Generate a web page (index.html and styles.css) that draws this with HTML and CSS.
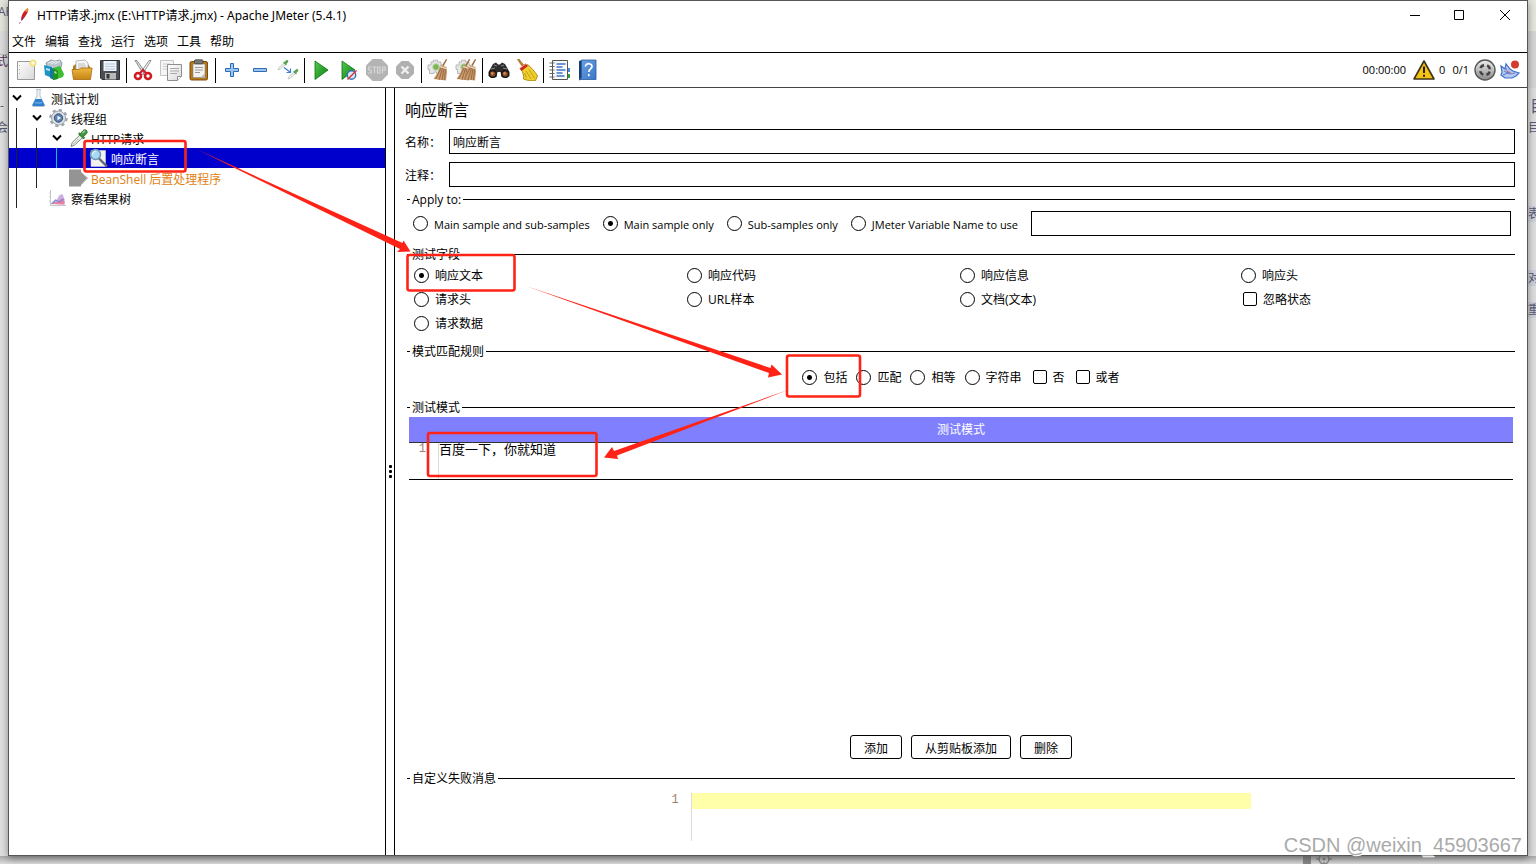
FILE: index.html
```html
<!DOCTYPE html>
<html lang="zh-CN">
<head>
<meta charset="utf-8">
<title>HTTP请求.jmx (E:\HTTP请求.jmx) - Apache JMeter (5.4.1)</title>
<link rel="stylesheet" href="styles.css">
</head>
<body>
<svg class="defs" aria-hidden="true">
  <defs>
    <linearGradient id="green" x1="0" y1="0" x2="1" y2="1"><stop offset="0" stop-color="#55c94e"/><stop offset="1" stop-color="#0a7f10"/></linearGradient>
    <linearGradient id="folder" x1="0" y1="0" x2="0" y2="1"><stop offset="0" stop-color="#f0b840"/><stop offset="1" stop-color="#c68414"/></linearGradient>
    <linearGradient id="paper" x1="0" y1="0" x2="1" y2="1"><stop offset="0" stop-color="#fff"/><stop offset="1" stop-color="#d8d8d8"/></linearGradient>
    <linearGradient id="book" x1="0" y1="0" x2="1" y2="1"><stop offset="0" stop-color="#6fa4e4"/><stop offset="1" stop-color="#3a77c8"/></linearGradient>
    <linearGradient id="knob" x1="0" y1="0" x2="0" y2="1"><stop offset="0" stop-color="#eee"/><stop offset="1" stop-color="#8a8a8a"/></linearGradient>
    <symbol id="broom" viewBox="0 0 22 22">
      <path d="M19 0l1.200.6-3.500 6.500-1.500-.8z" fill="#a06a3c"/>
      <path d="M13.500 6l6 2 .5 5-1 8.500L6.500 20l4-6z" fill="#c99a6b"/>
      <path d="M14 9l-5.500 11M15.500 9l-3.500 12M17 9.500l-2 11.500M18.500 10l-1 11" stroke="#8b5f38" stroke-width=".8" fill="none"/>
      <path d="M13 7.500l6.500 2.200" stroke="#eadbc8" stroke-width="1.200"/>
    </symbol>
    <symbol id="cog" viewBox="0 0 22 22">
      <path d="M4 3h2.500V1.200h4V3H14v3h1.500v5H14v3.500H9.500V13H7v1.500H2.500V10.500H1V6h3z" fill="#e6e6e6" stroke="#aaa" stroke-width=".8"/>
      <circle cx="9" cy="8" r="3.200" fill="#78b84c" stroke="#b9cfa8" stroke-width="1"/>
    </symbol>
    <symbol id="dropper" viewBox="0 0 20 20">
      <path d="M2 18.500l1.200-4L11 7l2.600 2.600-8 7.500z" fill="#eef4ee" stroke="#6f7a72" stroke-width=".9"/>
      <path d="M4 16.500l6-6" stroke="#a9b8ac" stroke-width="1"/>
      <path d="M9.500 6l5 5 1.200-1.300-1-1.200 3-3c1.200-1.500.3-3.600-1.500-3.800-1 0-1.600.4-2.300 1.100L11.500 5.500l-1-.8z" fill="#3f9440" stroke="#1f5f26" stroke-width=".7"/>
      <path d="M13.500 5l2.500-2.300" stroke="#a4dca0" stroke-width="1.200"/>
    </symbol>
    <symbol id="mini-dropper" viewBox="0 0 12 12">
      <path d="M1 11l1-2.500L7 4l1.500 1.500L3.500 10z" fill="#f0f2f0" stroke="#b9c0ba" stroke-width=".8"/>
      <path d="M6 3.500l3 3 .8-.8-.5-.7 1.700-1.700c.8-.9.2-2-.9-2.200-.6 0-1 .2-1.400.6L7.300 3z" fill="#58a052"/>
    </symbol>
  </defs>
</svg>

<div class="desktop">
  <aside class="behind behind-left">
    <span class="peek-a">AP</span><span class="peek-b">式</span><span class="peek-c">-</span><span class="peek-d">会</span>
  </aside>

  <div class="window">
    <header class="titlebar">
      <svg class="feather" viewBox="0 0 12 18"><path d="M3.200 12.500C3 8.500 5.500 4 9.500 1.200c1.300 1.300.6 3-.5 5.200-1.300 2.500-2.800 4.500-4.800 6.800z" fill="#c9202c"/><path d="M6.500 4c1-1.200 2-2.200 3-2.800 1.300 1 .8 2.500 0 4z" fill="#ec8a2c"/><path d="M1.500 16.500l.8-1.200M3.500 13.500L5 10" stroke="#7d2365" stroke-width="1" fill="none"/></svg>
      <h1>HTTP请求.jmx (E:\HTTP请求.jmx) - Apache JMeter (5.4.1)</h1>
      <div class="window-controls">
        <button aria-label="最小化"><svg viewBox="0 0 12 12"><path d="M1 5.500h10"/></svg></button>
        <button aria-label="最大化"><svg viewBox="0 0 12 12"><path d="M.5.500h9v9h-9z"/></svg></button>
        <button aria-label="关闭"><svg viewBox="0 0 12 12"><path d="M1 0l10 10M11 0L1 10"/></svg></button>
      </div>
    </header>

    <nav class="menubar">
      <button>文件</button><button>编辑</button><button>查找</button><button>运行</button><button>选项</button><button>工具</button><button>帮助</button>
    </nav>

    <div class="toolbar">
      <button aria-label="新建"><svg viewBox="0 0 22 22"><path d="M2.500 2.500h17v18h-17z" fill="url(#paper)" stroke="#9a9a9a"/><path d="M4.500 6v1M4.500 10v1M4.500 14v1" stroke="#aaa"/><circle cx="18" cy="4" r="2.600" fill="#fffbe0" stroke="#f2e27a" stroke-width="1.800"/></svg></button>
      <button aria-label="模板"><svg viewBox="0 0 22 22"><path d="M3 4l5-3 4 1 5-1 2 3-2 9H6z" fill="#b9c6cc" stroke="#7b8c94" stroke-width=".8"/><path d="M5 4l6-2M8 5l6-3M12 5l5-3" stroke="#eef3f5"/><path d="M1 6l8 2v11l-7-3z" fill="#1d95c6"/><path d="M3 9l4 1v2L3 11z" fill="#bfe6f6"/><path d="M7 8l4 2v11l-4-2z" fill="#1376a4"/><path d="M10 9l7-2 4 8-1 3-9 3z" fill="#3dbd32"/><path d="M10 9l5 3v8l-5 1z" fill="#1f9220"/><path d="M11.500 12l2 1v2l-2-1z" fill="#b9efb0"/></svg></button>
      <button aria-label="打开"><svg viewBox="0 0 22 22"><path d="M2 7l3-2h12l2 3v11H2z" fill="#b17a1c"/><path d="M5 2l9-1 3 3v9H5z" fill="#f7f7f7" stroke="#a8a8a8" stroke-width=".8"/><path d="M7 5h7M7 7h8M7 9h8" stroke="#aaa" stroke-width=".8"/><path d="M1 10.500h7l2-1.500h11l-1.500 11.500h-17z" fill="url(#folder)" stroke="#a76b0c" stroke-width=".8"/></svg></button>
      <button aria-label="保存"><svg viewBox="0 0 22 22"><path d="M1.500 1.500h19v19H3l-1.500-1.500z" fill="#4a4e54" stroke="#2e3136"/><path d="M4.500 2h13v10h-13z" fill="#eef4fa"/><path d="M6 5h10M6 7.500h10M6 10h10" stroke="#a4bdd2" stroke-width=".8"/><path d="M6 14h11v6.500H6z" fill="#b8b8b8"/><path d="M7.500 15h3v4.500h-3z" fill="#333"/></svg></button>
      <i class="sep"></i>
      <button aria-label="剪切"><svg viewBox="0 0 22 22"><path d="M3 1.500l2 0 9 13-2 1.500z" fill="#ddd" stroke="#777" stroke-width=".8"/><path d="M19 1.500l-2 0-9 13 2 1.500z" fill="#f3f3f3" stroke="#777" stroke-width=".8"/><circle cx="6" cy="17" r="3" fill="none" stroke="#d01c24" stroke-width="2.600"/><circle cx="16" cy="17" r="3" fill="none" stroke="#d01c24" stroke-width="2.600"/><path d="M8 14l3-3 3 3" stroke="#d01c24" stroke-width="2" fill="none"/></svg></button>
      <button aria-label="复制"><svg viewBox="0 0 22 22"><path d="M.5 1.500h13v15H.5z" fill="#f5f5f5" stroke="#c5c5c5"/><path d="M3 5h7M3 7.500h7M3 10h4" stroke="#ccc"/><path d="M7.500 5.500h14v12l-4 4h-10z" fill="url(#paper)" stroke="#8f8f8f"/><path d="M10 9.500h9M10 12h9M10 14.500h7" stroke="#aaa"/><path d="M17.500 21.500v-4h4" fill="#fff" stroke="#8f8f8f"/></svg></button>
      <button aria-label="粘贴"><svg viewBox="0 0 22 22"><rect x="2" y="2.500" width="17.500" height="18.500" rx="1.500" fill="#b5761c" stroke="#7d4e0c"/><path d="M5 5h12v13.500H5z" fill="#f3f3f3" stroke="#888" stroke-width=".6"/><path d="M7 8.500h8M7 11h8M7 13.500h5" stroke="#999"/><path d="M17 14v4.500h-4.500z" fill="#bbb"/><rect x="6.500" y=".8" width="8.500" height="4" rx="1" fill="#777" stroke="#444" stroke-width=".8"/></svg></button>
      <i class="sep"></i>
      <button aria-label="展开"><svg viewBox="0 0 22 22"><path d="M9.500 4.500h3v5h5v3h-5v5h-3v-5h-5v-3h5z" fill="#9cc3ee" stroke="#2f6db5"/></svg></button>
      <button aria-label="折叠"><svg viewBox="0 0 22 22"><path d="M4.500 9.500h13v3h-13z" fill="#9cc3ee" stroke="#2f6db5"/></svg></button>
      <button aria-label="切换"><svg viewBox="0 0 22 22"><use href="#mini-dropper" x="0" y="0" width="12" height="12"/><use href="#mini-dropper" x="10" y="9" width="12" height="12"/><path d="M7 8.500l6 4.500M13.500 9.500V13.500H9.500" stroke="#3f7fd6" stroke-width="1.200" fill="none"/></svg></button>
      <i class="sep"></i>
      <button aria-label="启动"><svg viewBox="0 0 22 22"><path d="M5 2l13 9L5 20.500z" fill="url(#green)" stroke="#0b7312" stroke-width=".8"/></svg></button>
      <button aria-label="不停顿启动"><svg viewBox="0 0 22 22"><path d="M4 2l13 9L4 20.500z" fill="url(#green)" stroke="#0b7312" stroke-width=".8"/><circle cx="13.500" cy="16" r="4.200" fill="#dbe8f8" stroke="#3e6fb5" stroke-width="1.400"/><path d="M9.500 20.500l9-9" stroke="#e03030" stroke-width="1.500"/></svg></button>
      <button aria-label="停止" disabled><svg viewBox="0 0 22 22"><path d="M6.500 0h9L22 6.500v9L15.500 22h-9L0 15.500v-9z" fill="#b4b4b4"/><path d="M5.600 8H2.700v3h2.500v3H2.200M6.500 8h4M8.500 8v6M11.500 8h2.500v6h-2.500zM16.500 14.500V8H19v3.200h-2.500" stroke="#d8d8d8" stroke-width="1.200" fill="none"/></svg></button>
      <button aria-label="关闭" disabled><svg viewBox="0 0 22 22"><path d="M7.500 2h7L20 7.500v7L14.500 20h-7L2 14.500v-7z" fill="#b0b0b0"/><path d="M7.500 7.500l7 7M14.500 7.500l-7 7" stroke="#eee" stroke-width="2.400"/></svg></button>
      <i class="sep"></i>
      <button aria-label="清除"><svg viewBox="0 0 22 22"><use href="#cog" width="22" height="22"/><use href="#broom" width="22" height="22"/></svg></button>
      <button aria-label="清除全部"><svg viewBox="0 0 22 22"><use href="#cog" width="22" height="22"/><use href="#broom" x="-5" width="22" height="22"/><use href="#broom" x="1" width="22" height="22"/></svg></button>
      <i class="sep"></i>
      <button aria-label="查找"><svg viewBox="0 0 22 22"><path d="M5 5l3-1.500 2 2h2l2-2L17 5l4.500 8v4l-3 2-5-1-1-5H9.500l-1 5-5 1-3-2v-4z" fill="#2c2c2c"/><path d="M6 6l3 1M16 6l-3 1M3 10l4-1M19 10l-4-1" stroke="#888"/><circle cx="4.800" cy="15" r="3.300" fill="#8e4a22" stroke="#111" stroke-width="1.200"/><circle cx="17.200" cy="15" r="3.300" fill="#8e4a22" stroke="#111" stroke-width="1.200"/><circle cx="4.200" cy="14.400" r="1.300" fill="#d08a58"/><circle cx="16.600" cy="14.400" r="1.300" fill="#d08a58"/></svg></button>
      <button aria-label="重置查找"><svg viewBox="0 0 22 22"><path d="M1.500.5L3 0l5 6.300-1.800 1.300z" fill="#c8802c" stroke="#8d5212" stroke-width=".5"/><path d="M5 10l6.500-4.500C15 8 19 13 21.500 17l-2 4.500c-4 .5-8 .2-12-1.500C8 17 7 13 5 10z" fill="#f0cf2e" stroke="#a98506" stroke-width=".9"/><path d="M10 12l5 8M13 10.500l5.500 9M8.500 14l2 5" stroke="#b99a10" stroke-width=".9"/><path d="M3.500 9.500L9.500 4.500l2.500 2.500-6.500 5z" fill="#cc2a20"/><path d="M4.200 9L10 4.800" stroke="#f0b0a0" stroke-width=".8"/></svg></button>
      <i class="sep"></i>
      <button aria-label="函数助手"><svg viewBox="0 0 22 22"><path d="M18 9h3v4h-3z" fill="#4a88e8"/><path d="M18 15h3v4h-3z" fill="#2f9c3c"/><path d="M3.500 1.500h15v19h-15z" fill="#fafafa" stroke="#555"/><path d="M.5 4h5M.5 7.500h5M.5 11h5M.5 14.500h5M.5 18h5" stroke="#666" stroke-width="1.200"/><path d="M7.500 5h9M7.500 8h6M7.500 11h9M7.500 14h6M7.500 17h8" stroke="#3f73c8" stroke-width="1.300"/></svg></button>
      <button aria-label="帮助"><svg viewBox="0 0 22 22"><path d="M2 2l3-1v19l-3 1.500z" fill="#1c3f73"/><path d="M4.500 1h14.500v19.500H2l2.500-1.500z" fill="url(#book)" stroke="#2c5c9e" stroke-width=".8"/><path d="M8.500 7.500c0-3.800 6.500-3.600 6.500 0 0 2.500-3.200 2.500-3.200 5.500M11.800 15v2.200" stroke="#fff" stroke-width="1.700" fill="none"/></svg></button>

      <div class="status">
        <span class="elapsed">00:00:00</span>
        <svg viewBox="0 0 22 22"><path d="M11 2L21 20H1z" fill="#f5c211" stroke="#3b3416" stroke-width="1.600" stroke-linejoin="round"/><path d="M11 7.500v6.500M11 15.700v2" stroke="#222" stroke-width="2"/></svg>
        <span class="errors">0</span>
        <span class="threads">0/1</span>
        <svg viewBox="0 0 22 22"><circle cx="11" cy="11" r="10" fill="url(#knob)" stroke="#555" stroke-width="1.400"/><circle cx="11" cy="11" r="5" fill="none" stroke="#444" stroke-width="2.600" stroke-dasharray="4.600 3.250" stroke-dashoffset="-1.600"/></svg>
        <svg class="plug" viewBox="0 0 22 22"><path d="M2 7l4 3 1-5 4 5 3 2 6 2-3 3-4 2-7 0-4-3 1-3z" fill="#b4caf2" stroke="#3f6dcb" stroke-width="1.200"/><path d="M5 12l6 3 5-1M6 8l4 7M4 16l7-3" stroke="#5878cf" fill="none"/><path d="M7 11l7 4" stroke="#d68a8a"/><circle cx="16" cy="5.500" r="4" fill="#d23c2e"/></svg>
      </div>
    </div>

    <div class="body">
      <div class="tree" role="tree">
        <div class="node" role="treeitem">
          <button class="toggle" aria-label="折叠"><svg viewBox="0 0 12 12"><path d="M2 3.500l4 4 4-4"/></svg></button>
          <svg class="icon" viewBox="0 0 20 20"><path d="M7 1.500h5M8 2v6L3.500 17c-.4 1 .2 1.500 1 1.500h10c.8 0 1.400-.5 1-1.500L11 8V2" fill="#eef5fb" stroke="#b4c2ce"/><path d="M6.500 11h6l3 6c.2.700-.2 1-.8 1H4.300c-.6 0-1-.3-.8-1z" fill="#2f7fd0"/><path d="M6 15c2-1 4 1 7-.5" stroke="#8cc0f0" fill="none"/></svg>
          <span class="label">测试计划</span>
        </div>
        <div class="node" role="treeitem">
          <i class="guide"></i>
          <button class="toggle" aria-label="折叠"><svg viewBox="0 0 12 12"><path d="M2 3.500l4 4 4-4"/></svg></button>
          <svg class="icon" viewBox="0 0 20 20"><circle cx="9.500" cy="10" r="8" fill="none" stroke="#9da4ac" stroke-width="2.400" stroke-dasharray="3.200 3.080"/><circle cx="9.500" cy="10" r="7" fill="#dde0e4" stroke="#9da4ac"/><circle cx="9.500" cy="10" r="4.200" fill="#5c83b4" stroke="#3a5270"/><path d="M8.500 7.800l3.500 2.200-3.500 2.200z" fill="#fff"/></svg>
          <span class="label">线程组</span>
        </div>
        <div class="node" role="treeitem">
          <i class="guide"></i><i class="guide"></i>
          <button class="toggle" aria-label="折叠"><svg viewBox="0 0 12 12"><path d="M2 3.500l4 4 4-4"/></svg></button>
          <svg class="icon" viewBox="0 0 20 20"><use href="#dropper" width="20" height="20"/></svg>
          <span class="label">HTTP请求</span>
        </div>
        <div class="node selected" role="treeitem" aria-selected="true">
          <i class="guide"></i><i class="guide"></i><i class="guide current"></i><i class="blank"></i>
          <svg class="icon" viewBox="0 0 20 20"><path d="M2 2.500h14.500v16H2z" fill="#f1f1f1" stroke="#ccc" stroke-width=".6"/><path d="M10 10.500l8 8" stroke="#5e6a70" stroke-width="2.400"/><circle cx="6.500" cy="6.500" r="5" fill="#a9d8f4" stroke="#6a96ae" stroke-width="1.500"/><path d="M3.500 6.500c0-2 1.500-3 3-3" stroke="#fff" fill="none"/></svg>
          <span class="label">响应断言</span>
        </div>
        <div class="node disabled" role="treeitem">
          <i class="guide"></i><i class="guide"></i><i class="blank"></i>
          <svg class="icon" viewBox="0 0 20 20"><path d="M0 1.500h12V4l7 6-7 7v1.500H0z" fill="#949494"/><path d="M12 4l6 6-6 6.500" stroke="#b5b5b5" fill="none"/></svg>
          <span class="label">BeanShell 后置处理程序</span>
        </div>
        <div class="node" role="treeitem">
          <i class="guide"></i><i class="blank"></i>
          <svg class="icon" viewBox="0 0 20 20"><path d="M1.500 2v15.500H17" stroke="#c5c5c5" fill="none"/><path d="M0 5h2M0 9h2M0 13h2" stroke="#ccc"/><path d="M2.500 16l5-4 3-5 3-1 2 5v5.500z" fill="#c9b2e6"/><path d="M2.500 16l3-2 3 0 4-4 3 3v3.500z" fill="#ee7fa0"/><path d="M2.500 16l4-4 4 2 4.500-3" stroke="#7b8ad8" stroke-width="1.200" fill="none"/></svg>
          <span class="label">察看结果树</span>
        </div>
      </div>

      <div class="splitter"><i></i><i></i><i></i></div>

      <main class="panel">
        <h2>响应断言</h2>
        <div class="field"><label for="name">名称：</label><input id="name" type="text" value="响应断言"></div>
        <div class="field"><label for="comment">注释：</label><input id="comment" type="text"></div>

        <fieldset class="apply">
          <legend>Apply to:</legend>
          <div class="apply-row">
            <label><input type="radio" name="scope">Main sample and sub-samples</label>
            <label><input type="radio" name="scope" checked>Main sample only</label>
            <label><input type="radio" name="scope">Sub-samples only</label>
            <label><input type="radio" name="scope">JMeter Variable Name to use</label>
            <input type="text" aria-label="JMeter Variable Name to use">
          </div>
        </fieldset>

        <fieldset class="test-field">
          <legend>测试字段</legend>
          <div class="field-grid">
            <label><input type="radio" name="field" checked>响应文本</label>
            <label><input type="radio" name="field">响应代码</label>
            <label><input type="radio" name="field">响应信息</label>
            <label><input type="radio" name="field">响应头</label>
            <label><input type="radio" name="field">请求头</label>
            <label><input type="radio" name="field">URL样本</label>
            <label><input type="radio" name="field">文档(文本)</label>
            <label><input type="checkbox">忽略状态</label>
            <label><input type="radio" name="field">请求数据</label>
          </div>
        </fieldset>

        <fieldset class="rules">
          <legend>模式匹配规则</legend>
          <div class="rule-row">
            <label><input type="radio" name="rule" checked>包括</label>
            <label><input type="radio" name="rule">匹配</label>
            <label><input type="radio" name="rule">相等</label>
            <label><input type="radio" name="rule">字符串</label>
            <label><input type="checkbox">否</label>
            <label><input type="checkbox">或者</label>
          </div>
        </fieldset>

        <fieldset class="patterns">
          <legend>测试模式</legend>
          <div class="patterns-body">
            <table>
              <thead><tr><th>测试模式</th></tr></thead>
              <tbody><tr><td><div class="code"><span class="line-no">1</span><span class="line">百度一下，你就知道</span></div></td></tr></tbody>
            </table>
            <div class="actions"><button>添加</button><button>从剪贴板添加</button><button>删除</button></div>
          </div>
        </fieldset>

        <fieldset class="message">
          <legend>自定义失败消息</legend>
          <div class="message-editor"><span class="line-no">1</span><textarea rows="3" aria-label="自定义失败消息"></textarea></div>
        </fieldset>
      </main>
    </div>
  </div>

  <aside class="behind behind-right">
    <span class="peek-e">目</span><span class="peek-f">目</span><span class="peek-g">表</span><span class="peek-h">对</span><span class="peek-i">重</span>
  </aside>
  <div class="behind behind-bottom"><i class="thumb"></i><svg viewBox="0 0 16 16"><circle cx="8" cy="3" r="5" fill="none" stroke="#888" stroke-width="1.500"/><circle cx="8" cy="3" r="1.500" fill="#888"/><path d="M0 3h4M12 3h4M8 6v3" stroke="#888" stroke-width="1.500"/></svg></div>

  <svg class="annotations" viewBox="0 0 1536 864" aria-hidden="true">
    <g fill="none" stroke="#ff2216" stroke-width="2.600">
      <rect x="84.500" y="141" width="101" height="30.500" rx="2"/>
      <rect x="407.500" y="255" width="107" height="35.500" rx="2"/>
      <rect x="787" y="355.500" width="73" height="41" rx="2"/>
      <rect x="428" y="433" width="168.500" height="43" rx="2"/>
    </g>
    <g fill="#ff2216">
      <path d="M196 149L402.500 243 403.500 240.500 410.500 251.500 397 252 400 249z"/>
      <path d="M526 286L770.500 368 771.500 364.500 782 374.500 768 377.500 769 373z"/>
      <path d="M788 390L617 455.500 618 459 604 457.500 612 447 614 451z"/>
    </g>
  </svg>
  <div class="watermark">CSDN @weixin_45903667</div>
</div>
</body>
</html>
```

FILE: styles.css
```css
* { box-sizing: border-box; }

body {
  margin: 0;
  background: #e4e4e4;
  color: #000;
  font: 12px/16px "Open Sans", "Noto Sans CJK SC", sans-serif;
}

button, input, textarea { font: inherit; color: inherit; }
button { padding: 0; border: 0; background: none; }
svg { display: block; flex: none; }
.defs { position: absolute; width: 0; height: 0; }

.desktop {
  position: relative;
  display: grid;
  grid-template-columns: 8px minmax(0, 1fr) 8px;
  grid-template-rows: minmax(0, 1fr) 8px;
  height: 100vh;
  overflow: hidden;
}

/* Strips of the page that shows round the window */
.behind { display: flex; overflow: hidden; color: #5c5c70; white-space: nowrap; }
.behind-left, .behind-right { flex-direction: column; }
.behind-left { background: linear-gradient(#e3e5dc 31px, #dcdcdc 31px 54px, #bbb 54px 55px, #e0e0e0 55px); }
.behind-right { background: linear-gradient(#e6e8df 31px, #d6d6d6 31px 88px, #dedede 88px); }
.behind-bottom { grid-column: 1 / -1; background: linear-gradient(#a8a8a8, #dcdcdc); }
.peek-a { margin: 4px 0 0 -2px; }
.peek-b { margin: 34px 0 0 -4px; color: #553355; }
.peek-c { margin-top: 28px; }
.peek-d { margin: 6px 0 0 -4px; }
.behind-right { color: #5a5a78; }
.peek-e { margin: 98px 0 0 2px; font-size: 16px; }
.peek-f { margin-top: 6px; }
.peek-g { margin-top: 70px; background: #ced2da; }
.peek-h { margin-top: 48px; background: #ced2da; }
.peek-i { margin-top: 16px; background: #ced2da; }
.thumb { width: 8px; margin-left: 1303px; background: #888; }
.behind-bottom svg { width: 16px; height: 16px; margin-left: 5px; }

.window {
  position: relative;
  z-index: 1;
  display: flex;
  flex-direction: column;
  min-height: 0;
  border: 1px solid #555;
  background: #fff;
  box-shadow: 0 2px 8px #0006;
}

.titlebar { display: flex; align-items: center; flex: none; height: 30px; padding-left: 9px; }
.feather { width: 12px; height: 18px; }
.titlebar h1 { flex: 1; margin: 0 0 0 7px; font-family: "Noto Sans", "Noto Sans CJK SC", sans-serif; font-size: 12px; font-weight: 400; }
.window-controls { display: flex; }
.window-controls button { display: flex; align-items: center; justify-content: center; width: 45px; height: 30px; }
.window-controls svg { width: 12px; height: 12px; overflow: visible; fill: none; stroke: #000; }

.menubar { display: flex; flex: none; gap: 9px; height: 22px; padding: 1px 3px 0; border-bottom: 1px solid #000; }

.toolbar { display: flex; align-items: center; flex: none; height: 35px; padding: 0 6px 0 3px; border-bottom: 1px solid #444; }
.toolbar button { display: flex; justify-content: center; width: 28px; }
.toolbar svg { width: 22px; height: 22px; }
.sep { width: 1px; height: 25px; margin: 0 2px; background: #000; }
.status { display: flex; align-items: center; margin-left: auto; font-size: 11px; }
.elapsed { margin-right: 7px; }
.errors { margin: 0 7px 0 4px; }
.threads { margin-right: 5px; }
.status .plug { margin-left: 3px; }

.body { display: flex; flex: 1; min-height: 0; }

.tree { flex: none; width: 376px; }
.node { display: flex; align-items: center; height: 20px; }
.guide, .blank, .toggle { flex: none; width: 20px; height: 20px; }
.guide { border-left: 1px solid #222; margin-left: 7px; width: 13px; }
.toggle { padding-left: 2px; }
.toggle svg { width: 12px; height: 12px; fill: none; stroke: #000; stroke-width: 2; }
.icon { width: 20px; height: 20px; }
.label { margin-left: 2px; padding-top: 4px; white-space: nowrap; }
.selected { background: #0000cd; color: #fff; }
.guide.current { border-color: #00c8c8; }
.disabled { color: #e08214; }

.splitter {
  display: flex;
  flex: none;
  flex-direction: column;
  align-items: center;
  justify-content: center;
  gap: 2px;
  width: 10px;
  border: solid #000;
  border-width: 0 1px;
}
.splitter i { width: 3px; height: 3px; border-radius: 1px; background: #000; }

.panel { display: flex; flex: 1; flex-direction: column; min-width: 0; padding: 12px 12px 0 10px; }
.panel h2 { margin: 0 0 9px; font-size: 16px; font-weight: 400; line-height: 20px; }
.field { display: flex; align-items: center; margin-bottom: 8px; }
.field label { flex: none; width: 44px; padding-top: 2px; }
input[type="text"] { flex: 1; min-width: 0; height: 25px; padding: 0 3px; border: 1px solid #000; background: #fff; outline: 0; }

fieldset { min-width: 0; margin: 0 0 0 2px; padding: 0; border: 0 solid #000; border-top-width: 1px; }
legend { margin-left: 3px; padding: 2px 2px 0; }
fieldset label { display: flex; align-items: center; gap: 6px; padding-top: 2px; white-space: nowrap; }

input[type="radio"], input[type="checkbox"] {
  appearance: none;
  flex: none;
  width: 15px;
  height: 15px;
  margin: 0 0 2px;
  border: 1px solid #000;
  border-radius: 50%;
  background: #fff;
}
input[type="radio"]:checked { background: radial-gradient(circle, #000 2px, #fff 3px); }
input[type="checkbox"] { width: 14px; height: 14px; margin: 0 0 2px 2px; border-radius: 2px; }

.apply { margin-top: -5px; }
.apply-row { display: flex; align-items: center; gap: 13px; padding: 3px 4px 9px 6px; font-size: 11px; }
.field-grid {
  display: grid;
  grid-template-columns: 273fr 273fr 281fr 274fr;
  grid-auto-rows: 24px;
  padding: 0 0 7px 7px;
}
.rule-row { display: flex; align-items: center; justify-content: center; gap: 9px; height: 24px; margin: 5px 0 9px; }

.patterns { flex: 1; min-height: 0; }
.patterns-body { display: flex; flex-direction: column; justify-content: space-between; height: 100%; padding: 1px 2px 10px; }
table { width: 100%; border-collapse: collapse; border-bottom: 1px solid #000; }
th { height: 25px; padding: 2px 0 0; border-bottom: 1px solid #333; background: #8080ff; color: #fff; font-weight: 400; }
td { height: 36px; padding: 0; }
.code { display: flex; height: 36px; line-height: 12px; }
.line-no { color: #a08070; font-family: "Liberation Mono", monospace; text-align: right; }
.code .line-no { width: 30px; padding-right: 12px; border-right: 1px solid #ddd; }
.line { font-size: 13px; }
.actions { display: flex; justify-content: center; gap: 9px; }
.actions button { height: 24px; padding: 3px 13px 0; border: 1px solid #000; border-radius: 3px; }

.message-editor { display: flex; justify-content: center; padding: 6px 0 14px; }
.message-editor .line-no { padding-right: 12px; line-height: 14px; }
.message-editor textarea {
  flex: 0 1 560px;
  min-width: 0;
  height: 48px;
  padding: 0;
  border: 0;
  border-left: 1px solid #ddd;
  background: linear-gradient(#ffffaa 16px, #fff 16px);
  outline: 0;
  resize: none;
}

.annotations { position: absolute; z-index: 2; inset: 0; width: 1536px; height: 864px; pointer-events: none; }
.watermark {
  position: absolute;
  z-index: 3;
  right: 14px;
  bottom: 7px;
  color: #aaa;
  font: 20px/24px "Liberation Sans", sans-serif;
  text-shadow: 1px 1px 0 #fff;
}
```
